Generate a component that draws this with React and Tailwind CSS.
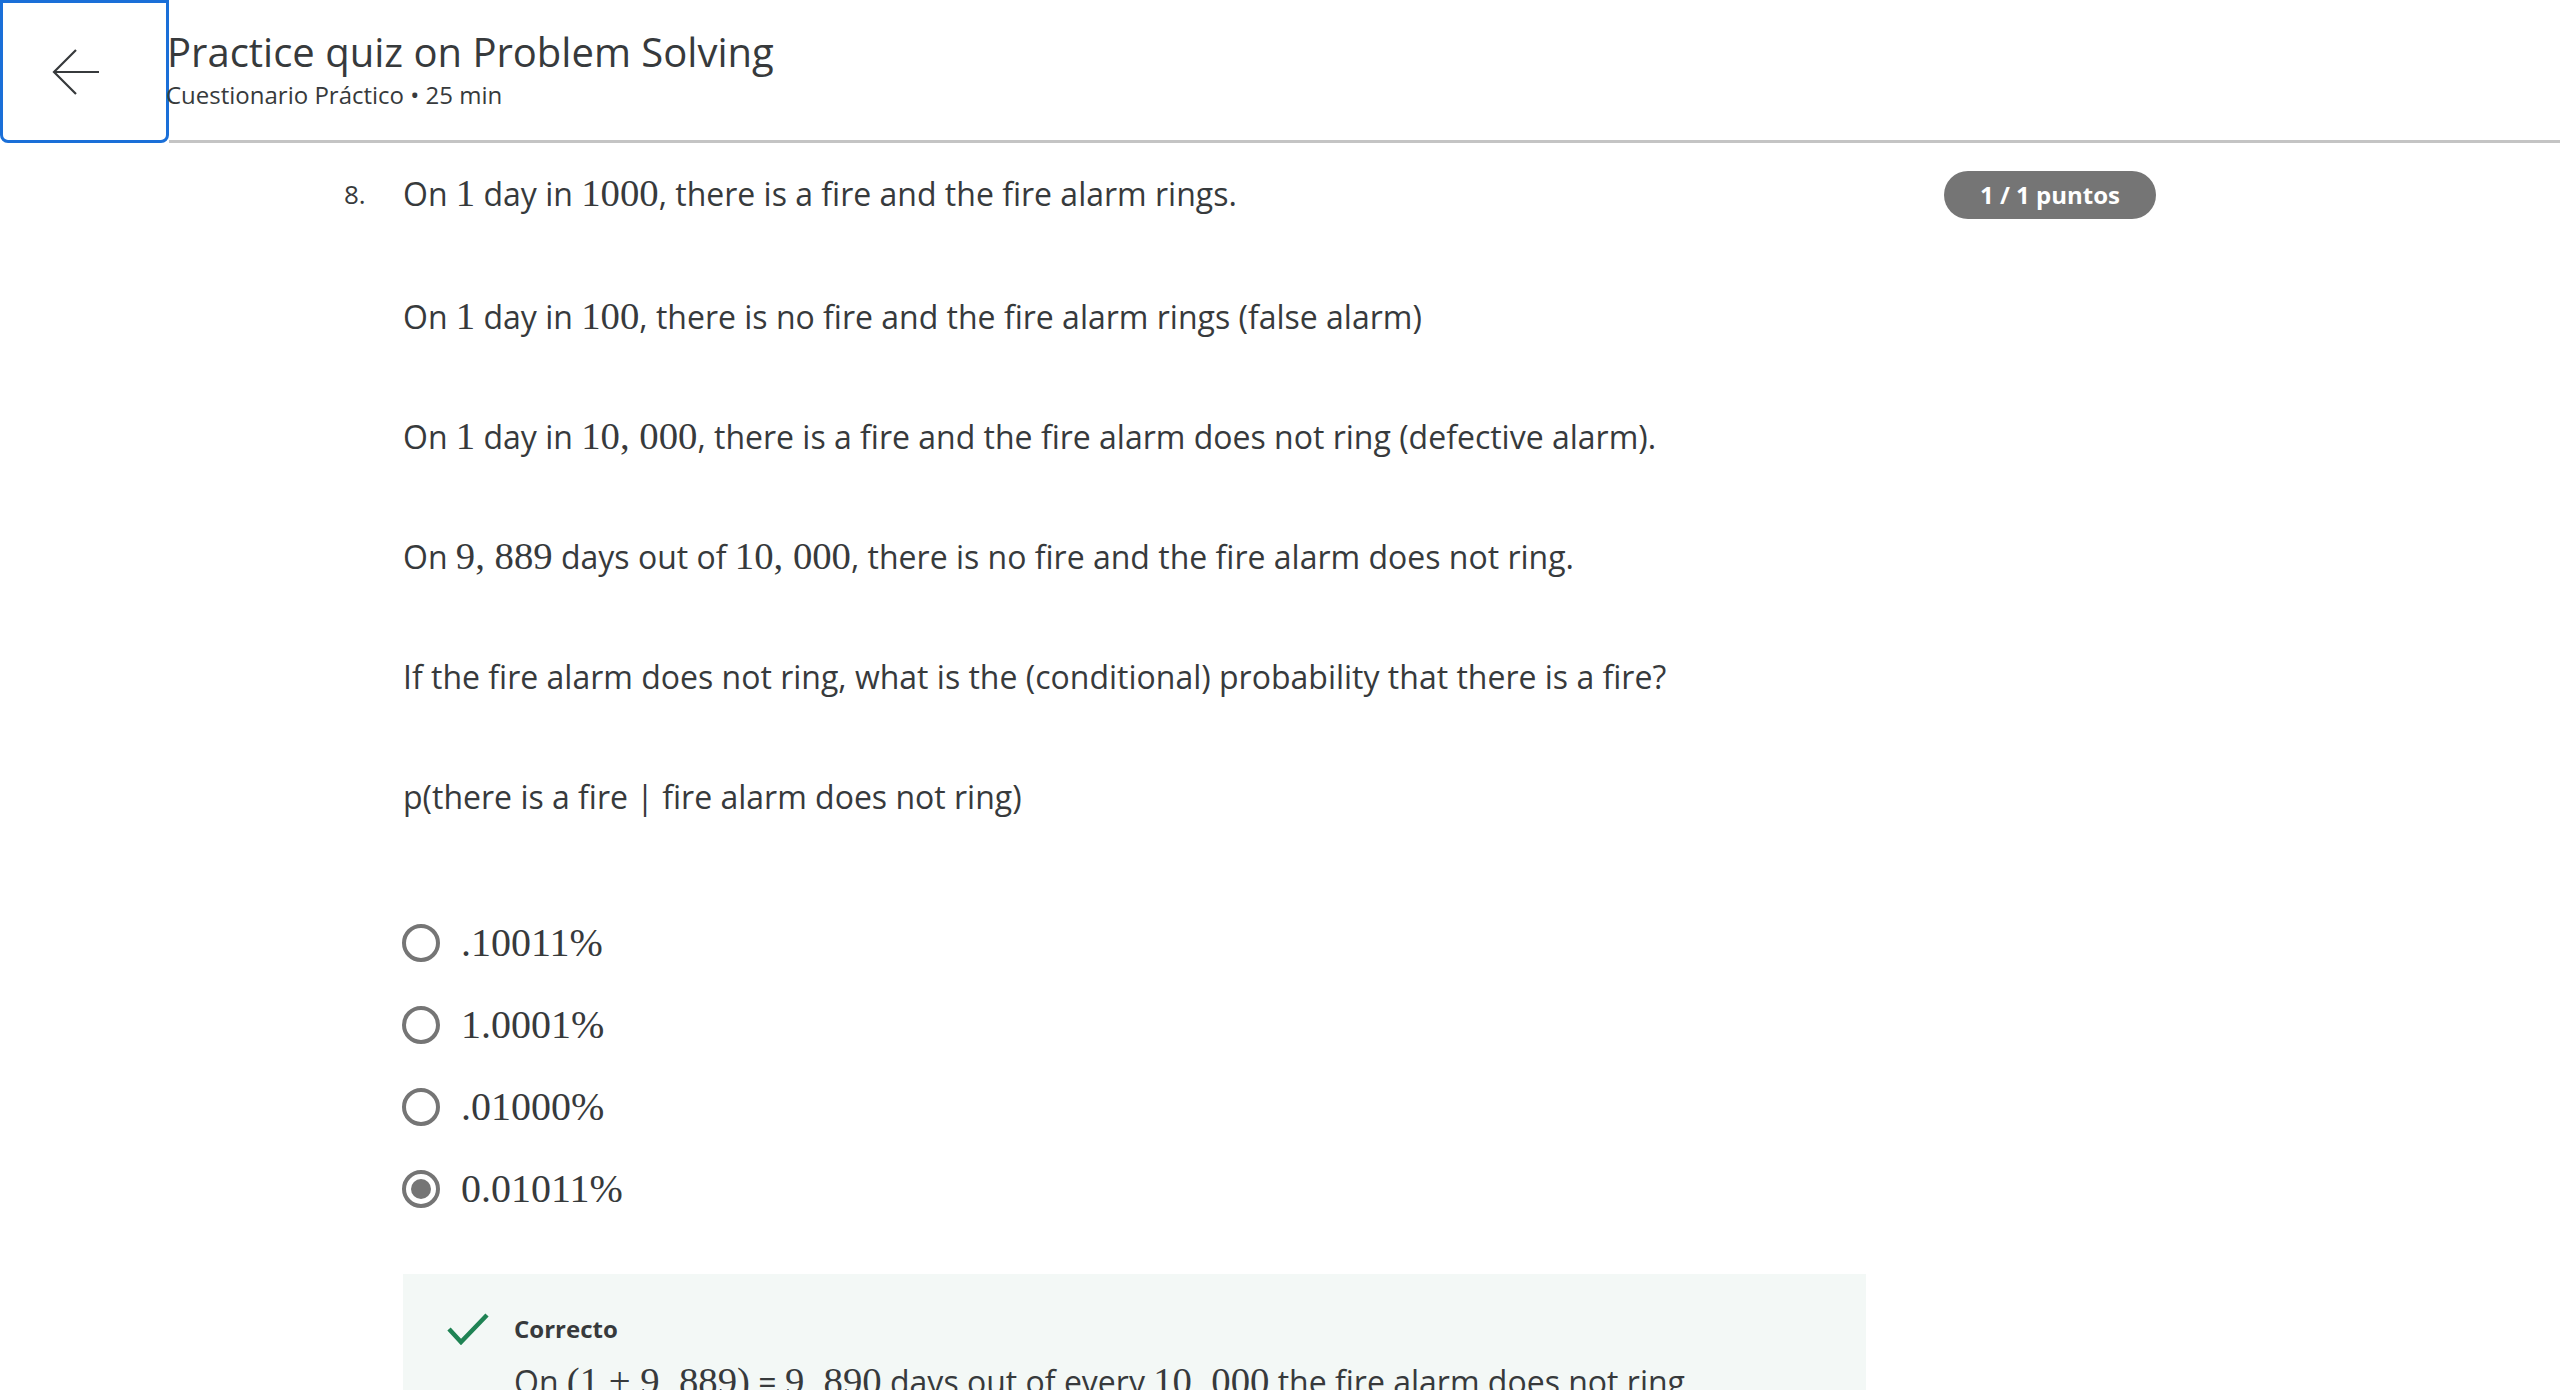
import React from 'react';

const M = ({ children }) => (
    <span className="font-['Liberation_Serif',serif] text-[1.21em] leading-none">{children}</span>
);

const Radio = ({ checked }) => (
    <span className="flex items-center justify-center w-[38px] h-[38px] rounded-full border-[4px] border-[#757575] shrink-0">
        {checked && <span className="w-[20px] h-[20px] rounded-full bg-[#757575]" />}
    </span>
);

const options = [
    { label: '.10011%', checked: false },
    { label: '1.0001%', checked: false },
    { label: '.01000%', checked: false },
    { label: '0.01011%', checked: true },
];

const App = () => {
    return (
        <div className="bg-white text-[#373a3c] font-['Open_Sans',sans-serif] overflow-hidden h-[1390px]">
            <header className="flex items-stretch h-[143px]">
                <button className="flex items-center justify-start pl-[49px] w-[169px] h-[143px] border-[3px] border-[#1a6fd8] rounded-b-[8px] shrink-0">
                    <svg width="48" height="48" viewBox="0 0 48 48" fill="none" stroke="#373a3c" strokeWidth="2.2">
                        <path d="M47 24H2" />
                        <path d="M24 2L2 24l22 22" />
                    </svg>
                </button>
                <div className="flex-1 flex flex-col border-b-[3px] border-[#c4c4c4] pt-[28px]">
                    <h1 className="text-[40px] leading-[48px] text-[#373a3c] -ml-[2px]">Practice quiz on Problem Solving</h1>
                    <div className="mt-[3px] text-[24px] leading-[32px] text-[#373a3c] -ml-[3px]">Cuestionario Práctico • 25 min</div>
                </div>
            </header>

            <main className="flex pl-[344px] pt-[29px] pr-[404px]">
                <div className="w-[59px] text-[26px] leading-[44px] text-[#373a3c]">8.</div>
                <div className="flex-1">
                    <div className="flex justify-between items-start">
                        <p className="text-[32px] leading-[44px]">
                            On <M>1</M> day in <M>1000</M>, there is a fire and the fire alarm rings.
                        </p>
                        <span className="mt-[-1px] h-[48px] px-[36px] flex items-center rounded-full bg-[#757575] text-white font-bold text-[24px]">
                            1 / 1 puntos
                        </span>
                    </div>
                    <div className="text-[32px] leading-[44px] flex flex-col gap-[76px] mt-[76px] pr-[290px]">
                        <p>On <M>1</M> day in <M>100</M>, there is no fire and the fire alarm rings (false alarm)</p>
                        <p>On <M>1</M> day in <M>10, 000</M>, there is a fire and the fire alarm does not ring (defective alarm).</p>
                        <p>On <M>9, 889</M> days out of <M>10, 000</M>, there is no fire and the fire alarm does not ring.</p>
                        <p>If the fire alarm does not ring, what is the (conditional) probability that there is a fire?</p>
                        <p>p(there is a fire | fire alarm does not ring)</p>
                    </div>

                    <div className="flex flex-col mt-[83px]">
                        {options.map((o) => (
                            <label key={o.label} className="flex items-center h-[82px] gap-[21px] -ml-[1px]">
                                <Radio checked={o.checked} />
                                <span className="font-['Liberation_Serif',serif] text-[40px] text-[#373a3c]">{o.label}</span>
                            </label>
                        ))}
                    </div>

                    <div className="mt-[44px] mr-[290px] bg-[#f3f8f6] pl-[44px] pt-[37px] pb-[40px]">
                        <div className="flex items-center gap-[25px]">
                            <svg width="42" height="32" viewBox="0 0 42 32" fill="none" stroke="#1f8354" strokeWidth="4.5">
                                <path d="M2 16l12 13L40 2" />
                            </svg>
                            <span className="font-bold text-[24px] text-[#373a3c]">Correcto</span>
                        </div>
                        <p className="ml-[67px] mt-[13px] text-[32px] leading-[44px]">
                            On <M>(1 + 9, 889)</M> = <M>9, 890</M> days out of every <M>10, 000</M> the fire alarm does not ring
                        </p>
                    </div>
                </div>
            </main>
        </div>
    );
};

export default App;
